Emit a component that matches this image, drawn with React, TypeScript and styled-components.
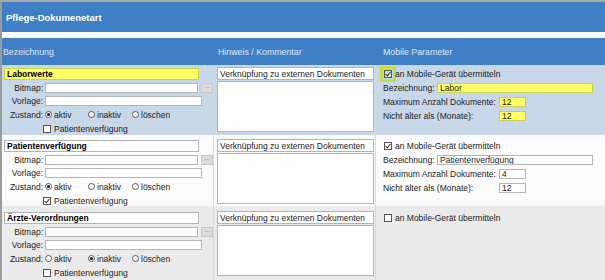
import React from 'react'
import styled, { createGlobalStyle, css } from 'styled-components'

const GlobalStyle = createGlobalStyle`
  html, body {
    margin: 0;
    padding: 0;
    background: #ffffff;
  }
  body {
    font-family: "Liberation Sans", Arial, sans-serif;
    font-size: 8.5px;
    color: #1c1c1c;
  }
`

const Frame = styled.div`
  width: 605px;
  height: 280px;
  overflow: hidden;
  box-sizing: border-box;
  border-top: 2px solid #a9a9a9;
  border-left: 2px solid #9c9c9c;
  display: flex;
  flex-direction: column;
`

const TitleBar = styled.div`
  height: 30px;
  flex: none;
  background: #3f7fc5;
  color: #fff;
  font-weight: bold;
  font-size: 9.5px;
  display: flex;
  align-items: center;
  padding-left: 4px;
`

const Strip = styled.div`
  height: 6px;
  flex: none;
  background: #fbfbff;
`

const cols = css`
  display: grid;
  grid-template-columns: 212px 162px 1fr;
`

const HeadRow = styled.div`
  ${cols};
  height: 27px;
  flex: none;
  background: #3f7fc5;
  color: #dfe9f6;
  font-size: 8.8px;
  align-items: center;
`

const HeadCell = styled.div<{ $pad: number }>`
  padding-left: ${(p) => p.$pad}px;
`

const Row = styled.div<{ $bg: string; $h?: number }>`
  ${cols};
  background: ${(p) => p.$bg};
  ${(p) => (p.$h ? `height: ${p.$h}px; flex: none;` : 'flex: 1;')}
`

const NameCol = styled.div<{ $top: number }>`
  display: flex;
  flex-direction: column;
  gap: 3px;
  padding: ${(p) => p.$top}px 0 0 2px;
  border-right: 1px solid #dadada;
`

const boxBase = css`
  box-sizing: border-box;
  border: 1px solid #b4b4b4;
  background: #fff;
  font-size: 8.5px;
  padding-left: 2px;
  display: flex;
  align-items: center;
  white-space: nowrap;
  overflow: hidden;
`

const NameBox = styled.div<{ $hl?: boolean }>`
  ${boxBase};
  width: 195px;
  height: 12px;
  font-weight: bold;
  color: #000;
  ${(p) => p.$hl && 'background: #ffff66; border-color: #c9d24a;'}
`

const Line = styled.div`
  display: flex;
  align-items: center;
  height: 10px;
`

const Label = styled.span<{ $w: number }>`
  width: ${(p) => p.$w}px;
  text-align: right;
  padding-right: 2px;
  flex: none;
`

const PathBox = styled.div`
  ${boxBase};
  width: 157px;
  height: 10px;
`

const Dots = styled.span`
  box-sizing: border-box;
  width: 12px;
  height: 10px;
  margin-left: 3px;
  background: #dcdcdc;
  border: 1px solid #c8c8c8;
  color: #8a8a8a;
  font-size: 7px;
  line-height: 4px;
  text-align: center;
`

const StateLine = styled.div`
  display: flex;
  align-items: center;
  height: 11px;
`

const Option = styled.span<{ $w: number }>`
  display: flex;
  align-items: center;
  gap: 2px;
  width: ${(p) => p.$w}px;
`

const Radio = styled.span<{ $on?: boolean }>`
  box-sizing: border-box;
  width: 7px;
  height: 7px;
  border-radius: 50%;
  border: 1px solid #555;
  background: #fff;
  position: relative;
  &::after {
    content: '';
    display: ${(p) => (p.$on ? 'block' : 'none')};
    position: absolute;
    left: 1px;
    top: 1px;
    width: 3px;
    height: 3px;
    border-radius: 50%;
    background: #111;
  }
`

const CheckLine = styled.div<{ $indent: number }>`
  display: flex;
  align-items: center;
  gap: 3px;
  height: 11px;
  padding-left: ${(p) => p.$indent}px;
`

const Box = styled.span<{ $focus?: boolean }>`
  box-sizing: border-box;
  width: 8px;
  height: 8px;
  border: 1px solid #555;
  background: #fff;
  display: flex;
  align-items: center;
  justify-content: center;
  flex: none;
  ${(p) =>
    p.$focus &&
    'background: #d6dde6; outline: 3px solid #c6dc4c; outline-offset: 1px;'}
`

const NoteCol = styled.div<{ $top: number }>`
  display: flex;
  flex-direction: column;
  gap: 1px;
  padding: ${(p) => p.$top}px 0 0 3px;
  border-right: 1px solid #dadada;
`

const NoteBox = styled.div`
  ${boxBase};
  width: 157px;
  height: 13px;
`

const NoteArea = styled.div`
  ${boxBase};
  width: 157px;
  height: 51px;
`

const MobileCol = styled.div<{ $top: number }>`
  display: flex;
  flex-direction: column;
  padding: ${(p) => p.$top}px 0 0 7px;
`

const MobileCheck = styled.div`
  display: flex;
  align-items: center;
  gap: 3px;
  height: 15px;
  padding-left: 1px;
`

const ParamLine = styled.div`
  display: flex;
  align-items: center;
  height: 14px;
`

const ParamLabel = styled.span<{ $w: number }>`
  width: ${(p) => p.$w}px;
  flex: none;
`

const ParamBox = styled.div<{ $w: number; $hl?: boolean }>`
  ${boxBase};
  width: ${(p) => p.$w}px;
  height: 10px;
  ${(p) => p.$hl && 'background: #ffff66; border-color: #c9d24a;'}
`

const Tick = () => (
  <svg width="6" height="6" viewBox="0 0 6 6">
    <path d="M0.6 3.1 L2.3 4.8 L5.4 1" stroke="#333" strokeWidth="1.1" fill="none" />
  </svg>
)

type Entry = {
  name: string
  state: 'aktiv' | 'inaktiv' | 'löschen'
  patient: boolean
  mobile: boolean
  mobileName?: string
  maxDocs?: string
  maxAge?: string
  selected?: boolean
  bg: string
  height?: number
  top: number
}

const entries: Entry[] = [
  {
    name: 'Laborwerte',
    state: 'aktiv',
    patient: false,
    mobile: true,
    mobileName: 'Labor',
    maxDocs: '12',
    maxAge: '12',
    selected: true,
    bg: '#c8d8e9',
    height: 70,
    top: 3,
  },
  {
    name: 'Patientenverfügung',
    state: 'aktiv',
    patient: true,
    mobile: true,
    mobileName: 'Patientenverfügung',
    maxDocs: '4',
    maxAge: '12',
    bg: '#fbfbfb',
    height: 71,
    top: 5,
  },
  {
    name: 'Ärzte-Verordnungen',
    state: 'inaktiv',
    patient: false,
    mobile: false,
    bg: '#ebebeb',
    top: 6,
  },
]

const options: { key: Entry['state']; w: number }[] = [
  { key: 'aktiv', w: 43 },
  { key: 'inaktiv', w: 44 },
  { key: 'löschen', w: 40 },
]

const DocRow = ({ e }: { e: Entry }) => (
  <Row $bg={e.bg} $h={e.height}>
    <NameCol $top={e.top}>
      <NameBox $hl={e.selected}>{e.name}</NameBox>
      <Line>
        <Label $w={39}>Bitmap:</Label>
        <PathBox />
        <Dots>...</Dots>
      </Line>
      <Line>
        <Label $w={39}>Vorlage:</Label>
        <PathBox />
      </Line>
      <StateLine>
        <Label $w={39}>Zustand:</Label>
        {options.map((o) => (
          <Option key={o.key} $w={o.w}>
            <Radio $on={e.state === o.key} />
            {o.key}
          </Option>
        ))}
      </StateLine>
      <CheckLine $indent={39}>
        <Box>{e.patient && <Tick />}</Box>
        Patientenverfügung
      </CheckLine>
    </NameCol>
    <NoteCol $top={e.top - 1}>
      <NoteBox>Verknüpfung zu externen Dokumenten</NoteBox>
      <NoteArea />
    </NoteCol>
    <MobileCol $top={e.top - 2}>
      <MobileCheck>
        <Box $focus={e.selected}>{e.mobile && <Tick />}</Box>
        an Mobile-Gerät übermitteln
      </MobileCheck>
      {e.mobile && (
        <>
          <ParamLine>
            <ParamLabel $w={54}>Bezeichnung:</ParamLabel>
            <ParamBox $w={156} $hl={e.selected}>
              {e.mobileName}
            </ParamBox>
          </ParamLine>
          <ParamLine>
            <ParamLabel $w={116}>Maximum Anzahl Dokumente:</ParamLabel>
            <ParamBox $w={27} $hl={e.selected}>
              {e.maxDocs}
            </ParamBox>
          </ParamLine>
          <ParamLine>
            <ParamLabel $w={116}>Nicht älter als (Monate):</ParamLabel>
            <ParamBox $w={27} $hl={e.selected}>
              {e.maxAge}
            </ParamBox>
          </ParamLine>
        </>
      )}
    </MobileCol>
  </Row>
)

export default function App() {
  return (
    <>
      <GlobalStyle />
      <Frame>
        <TitleBar>Pflege-Dokumenetart</TitleBar>
        <Strip />
        <HeadRow>
          <HeadCell $pad={1}>Bezeichnung</HeadCell>
          <HeadCell $pad={4}>Hinweis / Kommentar</HeadCell>
          <HeadCell $pad={7}>Mobile Parameter</HeadCell>
        </HeadRow>
        {entries.map((e) => (
          <DocRow key={e.name} e={e} />
        ))}
      </Frame>
    </>
  )
}
